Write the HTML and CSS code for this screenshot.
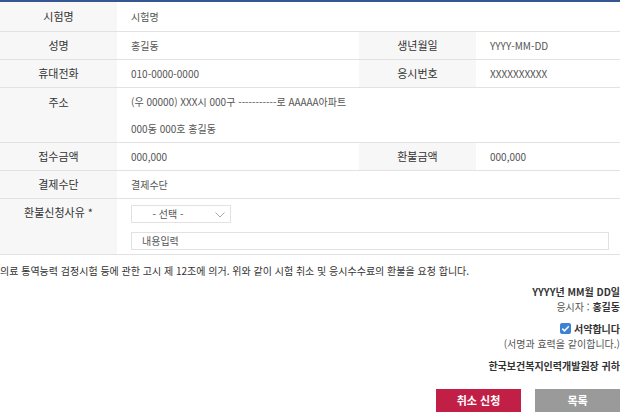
FILE: index.html
```html
<!DOCTYPE html>
<html lang="ko">
<head>
<meta charset="utf-8">
<link rel="stylesheet" href="styles.css">
</head>
<body>
<div class="page">
  <table class="info">
    <colgroup>
      <col class="c-lab"><col class="c-val"><col class="c-lab"><col class="c-val2">
    </colgroup>
    <tr>
      <th>시험명</th>
      <td colspan="3">시험명</td>
    </tr>
    <tr>
      <th>성명</th>
      <td>홍길동</td>
      <th>생년월일</th>
      <td>YYYY-MM-DD</td>
    </tr>
    <tr>
      <th>휴대전화</th>
      <td>010-0000-0000</td>
      <th>응시번호</th>
      <td>XXXXXXXXXX</td>
    </tr>
    <tr class="addr">
      <th>주소</th>
      <td colspan="3">
        <div class="line">(우 00000) XXX시 000구 -----------로 AAAAA아파트</div>
        <div class="line">000동 000호 홍길동</div>
      </td>
    </tr>
    <tr>
      <th>접수금액</th>
      <td>000,000</td>
      <th>환불금액</th>
      <td>000,000</td>
    </tr>
    <tr>
      <th>결제수단</th>
      <td colspan="3">결제수단</td>
    </tr>
    <tr class="reason">
      <th>환불신청사유 *</th>
      <td colspan="3">
        <div class="select">
          <span>- 선택 -</span>
          <svg class="chev" width="10" height="6" viewBox="0 0 10 6"><path d="M0.5 0.5 L5 5 L9.5 0.5" fill="none" stroke="#aaa" stroke-width="1"/></svg>
        </div>
        <div class="input">내용입력</div>
      </td>
    </tr>
  </table>

  <p class="notice">의료 통역능력 검정시험 등에 관한 고시 제 12조에 의거. 위와 같이 시험 취소 및 응시수수료의 환불을 요청 합니다.</p>

  <div class="sign">
    <div class="date">YYYY년 MM월 DD일</div>
    <div class="who">응시자 : <b>홍길동</b></div>
    <div class="agree">
      <span class="check"><svg width="11" height="11" viewBox="0 0 11 11"><rect width="11" height="11" rx="2" fill="#3b82d6"/><path d="M2.3 5.6 L4.5 7.8 L8.8 3.2" fill="none" stroke="#fff" stroke-width="1.5"/></svg></span>
      <b>서약합니다</b>
    </div>
    <div class="same">(서명과 효력을 같이합니다.)</div>
    <div class="to">한국보건복지인력개발원장 귀하</div>
  </div>

  <div class="btns">
    <button class="btn primary">취소 신청</button>
    <button class="btn gray">목록</button>
  </div>
</div>
</body>
</html>
```
FILE: styles.css
```css
* { box-sizing: border-box; }
html, body { margin: 0; padding: 0; background: #fff; }
body {
  font-family: "Noto Sans CJK KR", "Noto Sans", sans-serif;
  color: #333;
  width: 620px;
  height: 415px;
  overflow: hidden;
}
.page { width: 620px; }

.info {
  width: 620px;
  border-collapse: collapse;
  border-top: 2px solid #35568f;
  table-layout: fixed;
}
.c-lab { width: 117px; }
.c-val { width: 242px; }
.c-val2 { width: 144px; }

.info th, .info td {
  border-bottom: 1px solid #e2e2e2;
  height: 28px;
  padding: 0;
  vertical-align: middle;
}
.info th {
  background: #f7f7f7;
  font-weight: 400;
  font-size: 11px;
  color: #333;
  text-align: center;
}
.info td {
  font-size: 10px;
  color: #555;
  padding-left: 14px;
}
.info tr:first-child th, .info tr:first-child td { height: 30px; }

.addr th { vertical-align: top; padding-top: 6px; }
.addr .line { height: 27px; line-height: 27px; }

.reason th { vertical-align: top; padding-top: 5px; }
.reason td { padding-top: 6px; padding-bottom: 4px; padding-right: 11px; }

.select {
  width: 100px;
  height: 18px;
  border: 1px solid #e2e2e2;
  display: flex;
  align-items: center;
  justify-content: center;
  padding-right: 26px;
  position: relative;
  font-size: 10px;
  color: #555;
}
.select .chev { position: absolute; right: 5px; top: 6px; }
.input {
  margin-top: 9px;
  height: 18px;
  border: 1px solid #e2e2e2;
  display: flex;
  align-items: center;
  padding-left: 10px;
  font-size: 10px;
  color: #555;
}

.notice {
  margin: 0;
  padding-top: 8px;
  font-size: 10px;
  color: #333;
  line-height: 16px;
}

.sign {
  margin-top: 5px;
  text-align: right;
  font-size: 10px;
  line-height: 15px;
  color: #555;
}
.sign b { color: #333; font-weight: 700; }
.date { font-weight: 700; color: #333; }
.agree { margin-top: 7px; height: 15px; display: flex; justify-content: flex-end; align-items: center; gap: 3px; }
.agree b { color: #333; }
.check { display: flex; }
.to { margin-top: 7px; font-weight: 700; color: #333; }

.btns {
  margin-top: 16px;
  display: flex;
  justify-content: flex-end;
  gap: 14px;
}
.btn {
  width: 85px;
  height: 23px;
  border: 0;
  color: #fff;
  font-family: inherit;
  font-size: 11px;
  font-weight: 700;
  padding: 0;
}
.primary { background: #c21f47; }
.gray { background: #9a9a9a; }
```
